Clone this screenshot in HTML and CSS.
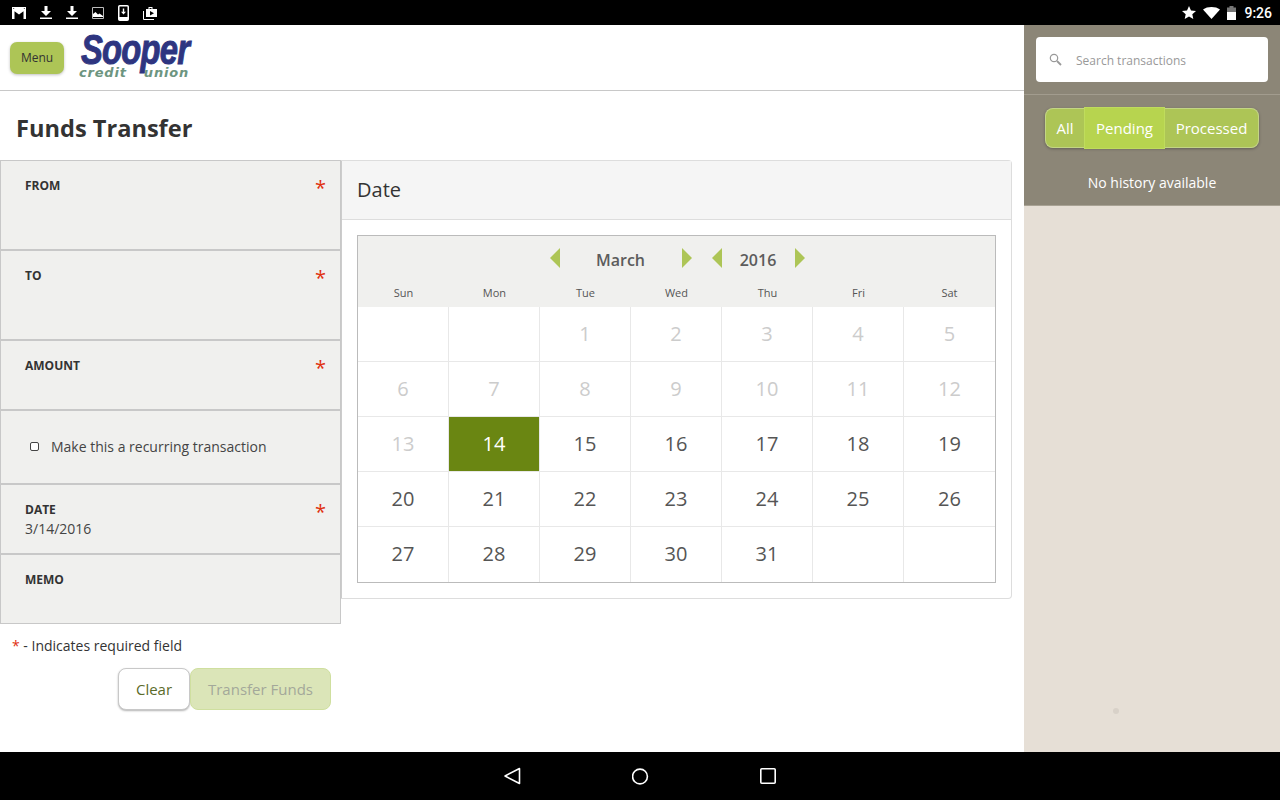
FILE: index.html
```html
<!DOCTYPE html>
<html lang="en">

<head>
    <meta charset="UTF-8">
    <meta name="viewport" content="width=device-width, initial-scale=1.0">
    <title>Funds Transfer</title>
    <link rel="stylesheet" href="styles.css">
</head>

<body>
    <!-- Android status bar -->
    <div class="status-bar">
        <div class="status-left">
            <svg width="14" height="12" viewBox="0 0 14 12"><path fill="#fff" d="M0 0h14v12H0z"/><path fill="#000" d="M2.500 12V4.200L7 7.600l4.500-3.400V12z"/><path fill="#666" d="M1 1h1.200v1H1zM11.800 1H13v1h-1.200z"/></svg>
            <svg width="12" height="13" viewBox="0 0 12 13"><path fill="#fff" d="M4.500 0h3v5H11L6 10 1 5h3.500zM0 11.500h12V13H0z"/></svg>
            <svg width="12" height="13" viewBox="0 0 12 13"><path fill="#fff" d="M4.500 0h3v5H11L6 10 1 5h3.500zM0 11.500h12V13H0z"/></svg>
            <svg width="12" height="12" viewBox="0 0 12 12"><path fill="none" stroke="#bbb" d="M.5.500h11v11H.5z"/><path fill="#fff" d="M1 10V7l2.500-2L6 7.500 7.500 6.500 11 9v1z"/></svg>
            <svg width="11" height="16" viewBox="0 0 11 16"><rect x=".75" y=".75" width="9.500" height="14.500" rx="1" fill="none" stroke="#fff" stroke-width="1.500"/><path fill="#fff" d="M1 12h9v3H1zM4.800 3.500h1.400v3.200H8L5.500 9.500 3 6.700h1.800z"/></svg>
            <svg width="14" height="14" viewBox="0 0 14 14"><path fill="#fff" d="M3 3h2.500V1h4v2H14v8H3zM6.500 3h2V2h-2zM7 5v4.500L11 7.200z" fill-rule="evenodd"/><path fill="none" stroke="#fff" d="M.5 5v8.500H11"/></svg>
        </div>
        <div class="status-right">
            <svg width="14" height="13" viewBox="0 0 14 13"><path fill="#fff" d="M7 0l2 4.500 5 .500-3.700 3.200L11.300 13 7 10.500 2.700 13l1-4.800L0 5l5-.500z"/></svg>
            <svg width="17" height="12" viewBox="0 0 17 12"><path fill="#fff" d="M0 2.500C2.300.800 5.200 0 8.500 0S14.700.800 17 2.500L8.500 12z"/></svg>
            <svg class="battery" width="9" height="14" viewBox="0 0 9 14"><path fill="#777" d="M2.500 0h4v1.500H9V6H0V1.500h2.500z"/><path fill="#fff" d="M0 6h9v8H0z"/></svg>
            <span class="clock">9:26</span>
        </div>
    </div>

    <div class="app">
        <div class="main">
            <div class="topbar">
                <button class="menu-btn">Menu</button>
                <div class="logo">
                    <div class="logo-name">Sooper</div>
                    <div class="logo-sub"><span>credit</span><span>union</span></div>
                </div>
            </div>

            <h1 class="page-title">Funds Transfer</h1>

            <div class="transfer">
                <!-- Form column -->
                <div class="form-col">
                    <div class="field field-tall"><label>FROM</label><span class="req">*</span></div>
                    <div class="field field-tall"><label>TO</label><span class="req">*</span></div>
                    <div class="field field-short"><label>AMOUNT</label><span class="req">*</span></div>
                    <div class="field field-check">
                        <span class="checkbox"></span>
                        <span>Make this a recurring transaction</span>
                    </div>
                    <div class="field field-short">
                        <label>DATE</label><span class="req">*</span>
                        <div class="field-value">3/14/2016</div>
                    </div>
                    <div class="field field-short"><label>MEMO</label></div>

                    <p class="req-note"><span class="req-mark">*</span> - Indicates required field</p>
                    <div class="form-actions">
                        <button class="btn btn-clear">Clear</button>
                        <button class="btn btn-submit" disabled>Transfer Funds</button>
                    </div>
                </div>

                <!-- Date picker -->
                <div class="date-panel">
                    <div class="panel-head">Date</div>
                    <div class="panel-body">
                        <div class="calendar">
                            <div class="cal-head">
                                <div class="cal-nav">
                                    <span class="arrow arrow-left"></span>
                                    <span class="cal-month">March</span>
                                    <span class="arrow arrow-right"></span>
                                    <span class="arrow arrow-left"></span>
                                    <span class="cal-year">2016</span>
                                    <span class="arrow arrow-right"></span>
                                </div>
                                <div class="cal-days">
                                    <span>Sun</span><span>Mon</span><span>Tue</span><span>Wed</span><span>Thu</span><span>Fri</span><span>Sat</span>
                                </div>
                            </div>
                            <div class="cal-grid">
                                <div class="cell"></div><div class="cell"></div><div class="cell off">1</div><div class="cell off">2</div><div class="cell off">3</div><div class="cell off">4</div><div class="cell off">5</div>
                                <div class="cell off">6</div><div class="cell off">7</div><div class="cell off">8</div><div class="cell off">9</div><div class="cell off">10</div><div class="cell off">11</div><div class="cell off">12</div>
                                <div class="cell off">13</div><div class="cell selected">14</div><div class="cell">15</div><div class="cell">16</div><div class="cell">17</div><div class="cell">18</div><div class="cell">19</div>
                                <div class="cell">20</div><div class="cell">21</div><div class="cell">22</div><div class="cell">23</div><div class="cell">24</div><div class="cell">25</div><div class="cell">26</div>
                                <div class="cell">27</div><div class="cell">28</div><div class="cell">29</div><div class="cell">30</div><div class="cell">31</div><div class="cell"></div><div class="cell"></div>
                            </div>
                        </div>
                    </div>
                </div>
            </div>
        </div>

        <!-- History sidebar -->
        <div class="sidebar">
            <div class="side-top">
                <div class="search-wrap">
                    <div class="search">
                        <svg width="13" height="13" viewBox="0 0 13 13"><circle cx="5" cy="5" r="3.700" fill="none" stroke="#999" stroke-width="1.200"/><path stroke="#999" stroke-width="1.800" d="M8 8l4 4"/></svg>
                        <span class="search-text">Search transactions</span>
                    </div>
                </div>
                <div class="filters">
                    <div class="filter-group">
                        <span class="filter filter-first">All</span>
                        <span class="filter filter-active">Pending</span>
                        <span class="filter filter-last">Processed</span>
                    </div>
                </div>
                <p class="no-history">No history available</p>
            </div>
            <div class="side-rest"><span class="dot"></span></div>
        </div>
    </div>

    <!-- Android nav bar -->
    <div class="nav-bar">
        <svg width="17" height="18" viewBox="0 0 17 18"><path fill="none" stroke="#fff" stroke-width="1.600" stroke-linejoin="round" d="M15.500 1.500v15L1 9z"/></svg>
        <svg width="17" height="17" viewBox="0 0 17 17"><circle cx="8" cy="8.500" r="7.400" fill="none" stroke="#fff" stroke-width="1.600"/></svg>
        <svg width="16" height="16" viewBox="0 0 16 16"><rect x=".8" y=".8" width="14.400" height="14.400" rx="1" fill="none" stroke="#fff" stroke-width="1.600"/></svg>
    </div>
</body>

</html>
```

FILE: styles.css
```css
* {
    box-sizing: border-box;
}

body {
    margin: 0;
    width: 1280px;
    height: 800px;
    overflow: hidden;
    display: flex;
    flex-direction: column;
    font-family: "Open Sans", Arial, sans-serif;
    color: #333;
    background-color: #fff;
}

/* Status bar */
.status-bar {
    height: 25px;
    background-color: #000;
    display: flex;
    justify-content: space-between;
    align-items: center;
    padding: 0 8px 0 12px;
}

.status-left {
    display: flex;
    align-items: center;
    gap: 14px;
}

.status-right {
    display: flex;
    align-items: center;
    gap: 7px;
}

.clock {
    font-family: Roboto, Arial, sans-serif;
    font-size: 14px;
    font-weight: 500;
    color: #fff;
    margin-left: 1px;
}

/* App area */
.app {
    flex: 1;
    display: flex;
    min-height: 0;
}

.main {
    width: 1024px;
    display: flex;
    flex-direction: column;
}

.topbar {
    height: 66px;
    display: flex;
    align-items: flex-start;
    border-bottom: 1px solid #c8c8c8;
    padding: 10px 0 0 10px;
}

.menu-btn {
    width: 54px;
    height: 32px;
    margin-top: 7px;
    padding: 0 0 2px;
    border: none;
    border-radius: 7px;
    background-color: #adc556;
    box-shadow: 0 1px 3px rgba(0, 0, 0, 0.25);
    font-family: inherit;
    font-size: 12px;
    color: #333;
}

.logo {
    margin-left: 15px;
    margin-top: -4px;
    width: 114px;
}

.logo-name {
    font-family: "Liberation Sans", Arial, sans-serif;
    font-size: 42px;
    font-weight: 700;
    font-style: italic;
    line-height: 38px;
    letter-spacing: -1px;
    color: #2e3580;
    transform: scaleX(0.78);
    transform-origin: left top;
    margin-left: 2px;
    white-space: nowrap;
    -webkit-text-stroke: 1px #2e3580;
}

.logo-sub {
    display: flex;
    justify-content: space-between;
    width: 110px;
    margin-top: -3px;
    font-family: "DejaVu Sans", Arial, sans-serif;
    font-size: 13px;
    font-weight: 700;
    font-style: italic;
    line-height: 14px;
    color: #6d9580;
    letter-spacing: 0.8px;
}

.page-title {
    margin: 0;
    padding: 21px 0 15px 16px;
    font-size: 23.600px;
    font-weight: 700;
    line-height: 33px;
    height: 69px;
    color: #333;
}

.transfer {
    display: flex;
    align-items: flex-start;
}

/* Form column */
.form-col {
    width: 341px;
}

.field {
    position: relative;
    background-color: #f0f0ee;
    border: 1px solid #c8c8c8;
    padding: 17px 24px 0;
    font-size: 14px;
}

.field label {
    display: block;
    font-size: 12px;
    font-weight: 700;
    line-height: 16px;
    color: #333;
}

.field-tall {
    height: 90px;
}

.field-short {
    height: 70px;
}

.field-check {
    height: 74px;
    display: flex;
    align-items: center;
    gap: 12px;
    padding: 0 0 2px 29px;
    font-size: 14px;
    color: #444;
}

.checkbox {
    width: 9px;
    height: 9px;
    border: 1px solid #444;
    border-radius: 2px;
    background-color: #fff;
}

.field-value {
    font-size: 14px;
    line-height: 20px;
    margin-top: 1px;
    color: #444;
}

.req {
    position: absolute;
    top: 14px;
    right: 14px;
    font-size: 20px;
    line-height: 26px;
    color: #e0300f;
}

.req-note {
    margin: 12px 0 0 12px;
    font-size: 14px;
    line-height: 20px;
    color: #333;
}

.req-mark {
    color: #e0300f;
}

.form-actions {
    display: flex;
    justify-content: flex-end;
    margin-top: 12px;
    padding-right: 10px;
}

.btn {
    height: 42px;
    padding: 0;
    border-radius: 8px;
    font-family: inherit;
    font-size: 15px;
}

.btn-clear {
    width: 72px;
    background-color: #fff;
    border: 1px solid #c8c8c8;
    box-shadow: 0 1px 2px rgba(0, 0, 0, 0.3);
    color: #5b6b2a;
}

.btn-submit {
    width: 141px;
    background-color: #dbe5b8;
    border: 1px solid #cfdf9f;
    color: #a3a89a;
}

/* Date panel */
.date-panel {
    width: 671px;
    height: 439px;
    border: 1px solid #ddd;
    border-left: 1px solid #ccc;
    border-radius: 0 4px 4px 0;
}

.panel-head {
    height: 59px;
    padding-left: 15px;
    background-color: #f5f5f5;
    border-bottom: 1px solid #ddd;
    font-size: 20px;
    line-height: 57px;
    color: #333;
}

.panel-body {
    padding: 15px;
}

.calendar {
    width: 639px;
    height: 348px;
    border: 1px solid #bbb;
}

.cal-head {
    height: 71px;
    background-color: #f0f0ee;
}

.cal-nav {
    height: 49px;
    display: flex;
    align-items: center;
    padding-left: 192px;
    padding-bottom: 5px;
    font-size: 16px;
    font-weight: 600;
    color: #5c5c5c;
}

.cal-month {
    width: 122px;
    padding: 3px 1px 0 0;
    text-align: center;
}

.cal-year {
    width: 73px;
    padding: 3px 1px 0 0;
    text-align: center;
}

.arrow {
    width: 0;
    height: 0;
    border-top: 10px solid transparent;
    border-bottom: 10px solid transparent;
}

.arrow-left {
    border-right: 10px solid #adc556;
}

.arrow-right {
    border-left: 10px solid #adc556;
    margin-right: 20px;
}

.cal-days {
    display: grid;
    grid-template-columns: repeat(7, 91px);
    font-size: 11px;
    line-height: 16px;
    color: #555;
    text-align: center;
}

.cal-grid {
    display: grid;
    grid-template-columns: repeat(7, 91px);
    grid-auto-rows: 55px;
}

.cell {
    display: flex;
    align-items: center;
    justify-content: center;
    padding-bottom: 2px;
    border-right: 1px solid #e8e8e8;
    border-bottom: 1px solid #e8e8e8;
    font-size: 20px;
    color: #555;
}

.cell:nth-child(7n) {
    border-right: none;
}

.cell:nth-last-child(-n+7) {
    border-bottom: none;
}

.cell.off {
    color: #ccc;
}

.cell.selected {
    background-color: #6a8612;
    color: #fff;
}

/* Sidebar */
.sidebar {
    width: 256px;
    display: flex;
    flex-direction: column;
}

.side-top {
    height: 181px;
    background-color: #8c8677;
    border-bottom: 1px solid #a8a294;
}

.search-wrap {
    height: 70px;
    padding: 12px;
    border-bottom: 1px solid #a29c8e;
}

.search {
    height: 45px;
    display: flex;
    align-items: center;
    gap: 14px;
    padding-left: 13px;
    background-color: #fff;
    border-radius: 4px;
    font-size: 12px;
    color: #999;
}

.search-text {
    padding-top: 2px;
}

.filters {
    padding: 13px 0 0 21px;
}

.filter-group {
    display: inline-flex;
    height: 40px;
    border-radius: 8px;
    box-shadow: 0 1px 3px rgba(0, 0, 0, 0.3);
}

.filter {
    display: flex;
    align-items: center;
    justify-content: center;
    height: 40px;
    background-color: #adc556;
    border: 1px solid #c3d585;
    font-size: 15px;
    color: #fff;
}

.filter-first {
    width: 39px;
    border-right: none;
    border-radius: 8px 0 0 8px;
}

.filter-active {
    width: 81px;
    height: 42px;
    margin-top: -1px;
    background-color: #b7d44f;
    border-color: #bfdc5c;
}

.filter-last {
    width: 94px;
    border-left: none;
    border-radius: 0 8px 8px 0;
}

.no-history {
    margin: 25px 0 0;
    text-align: center;
    font-size: 14px;
    line-height: 20px;
    color: #fff;
}

.side-rest {
    flex: 1;
    position: relative;
    background-color: #e6dfd6;
}

.dot {
    position: absolute;
    left: 89px;
    top: 502px;
    width: 6px;
    height: 6px;
    border-radius: 50%;
    background-color: #d8d1c8;
}

/* Nav bar */
.nav-bar {
    height: 48px;
    background-color: #000;
    display: flex;
    align-items: center;
    justify-content: center;
    gap: 111px;
}
```
